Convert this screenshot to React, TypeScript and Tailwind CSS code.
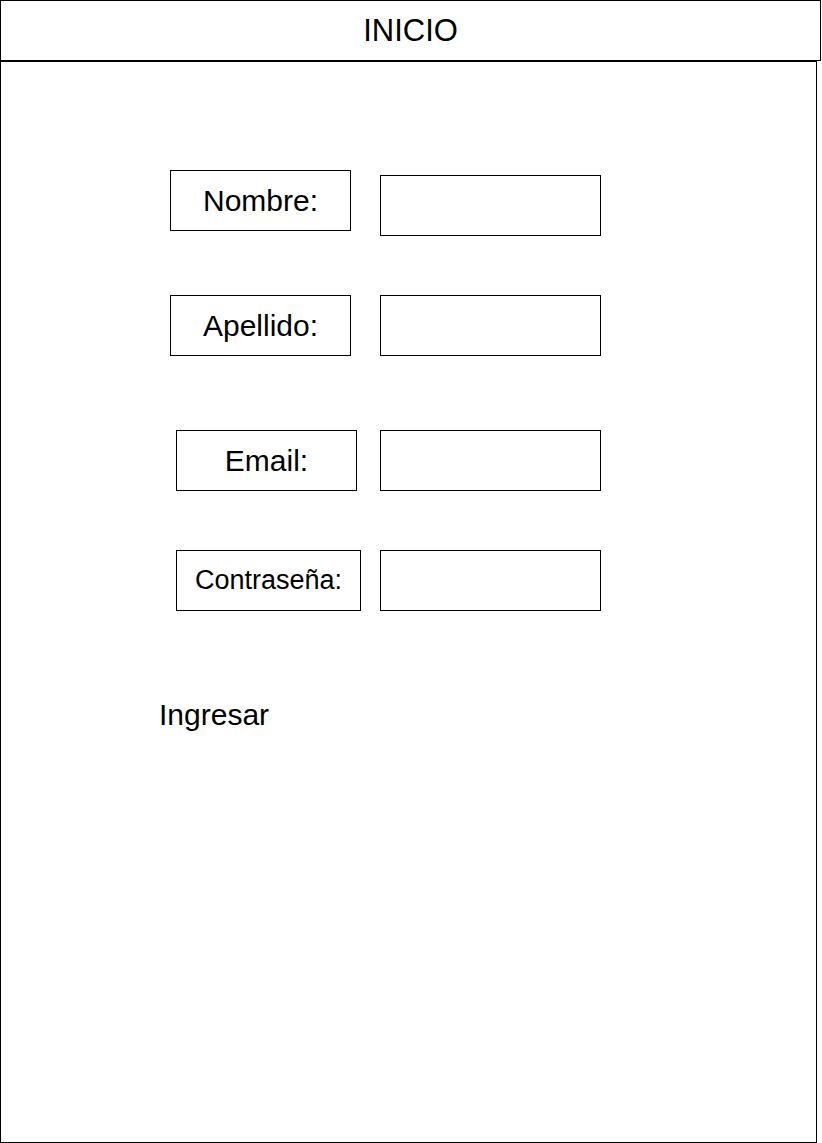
import React from "react";

type Field = {
  label: string;
  labelOffset: string;
  labelWidth: string;
  labelText: string;
  inputTop: string;
  rowGap: string;
};

const fields: Field[] = [
  { label: "Nombre:", labelOffset: "ml-[169px]", labelWidth: "w-[181px]", labelText: "text-[30px]", inputTop: "mt-[5px]", rowGap: "mt-[108px]" },
  { label: "Apellido:", labelOffset: "ml-[169px]", labelWidth: "w-[181px]", labelText: "text-[30px]", inputTop: "mt-0", rowGap: "mt-[59px]" },
  { label: "Email:", labelOffset: "ml-[175px]", labelWidth: "w-[181px]", labelText: "text-[30px]", inputTop: "mt-0", rowGap: "mt-[74px]" },
  { label: "Contraseña:", labelOffset: "ml-[175px]", labelWidth: "w-[185px]", labelText: "text-[27px]", inputTop: "mt-0", rowGap: "mt-[59px]" },
];

const FormRow = ({ field }: { field: Field }) => (
  <div className={`grid grid-cols-[379px_221px] items-start ${field.rowGap}`}>
    <div
      className={`${field.labelOffset} ${field.labelWidth} h-[61px] border border-black flex items-center justify-center leading-none ${field.labelText} text-black`}
    >
      {field.label}
    </div>
    <div className={`${field.inputTop} w-[221px] h-[61px] border border-black`} />
  </div>
);

const App = () => {
  return (
    <div className="w-[822px] h-[1143px] bg-white font-['Liberation_Sans',Arial,sans-serif]">
      <header className="w-[821px] h-[61px] border border-black flex items-center justify-center">
        <span className="text-[31px] text-black leading-none">INICIO</span>
      </header>

      <main className="w-[817px] h-[1082px] border border-black flex flex-col">
        {fields.map((f) => (
          <FormRow key={f.label} field={f} />
        ))}
        <p className="ml-[158px] mt-[87px] text-[30px] leading-[34px] text-black">Ingresar</p>
      </main>
    </div>
  );
};

export default App;
